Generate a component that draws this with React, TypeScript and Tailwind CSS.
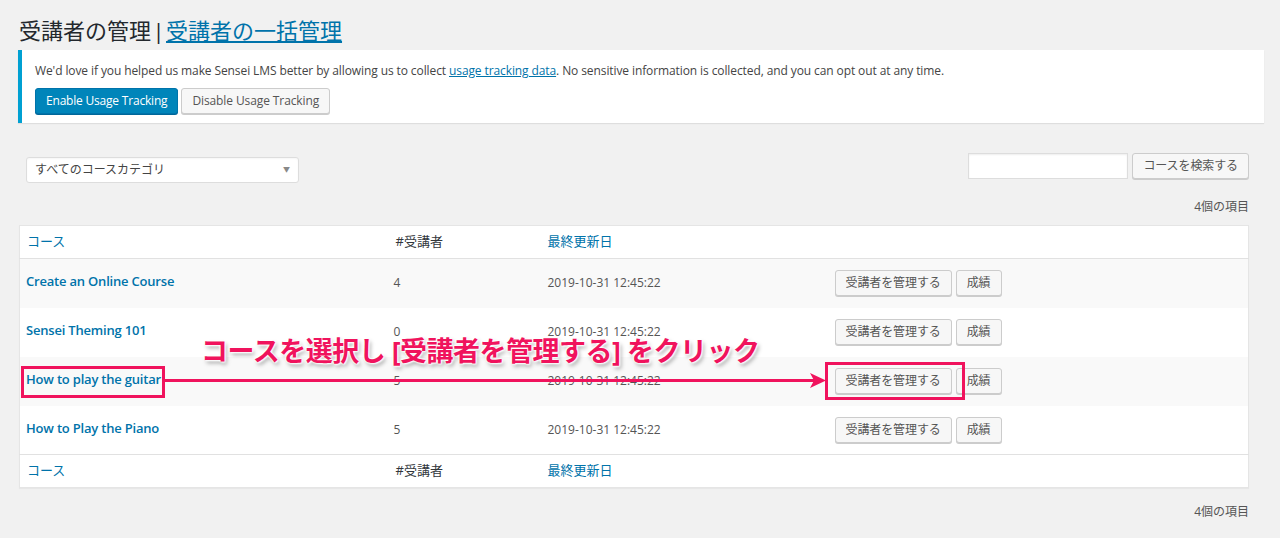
import React from 'react';

type Course = {
  title: string;
  students: number;
  updated: string;
};

const courses: Course[] = [
  { title: 'Create an Online Course', students: 4, updated: '2019-10-31 12:45:22' },
  { title: 'Sensei Theming 101', students: 0, updated: '2019-10-31 12:45:22' },
  { title: 'How to play the guitar', students: 5, updated: '2019-10-31 12:45:22' },
  { title: 'How to Play the Piano', students: 5, updated: '2019-10-31 12:45:22' },
];

const font = "font-['Open_Sans','Noto_Sans_CJK_JP',sans-serif]";

function GrayButton({ children }: { children: React.ReactNode }) {
  return (
    <button className="h-[26px] px-[10px] rounded-[3px] border border-[#cccccc] bg-[#f7f7f7] text-[12px] leading-[24px] tracking-[-0.1px] text-[#555555] shadow-[0_1px_0_#cccccc]">
      {children}
    </button>
  );
}

function HeaderRow() {
  return (
    <tr className="h-[33px]">
      <th className="pl-[7px] text-left font-normal text-[13px] text-[#0073aa]">コース</th>
      <th className="pl-[7px] text-left font-normal text-[13px] text-[#32373c]">#受講者</th>
      <th className="pl-[7px] text-left font-normal text-[13px] text-[#0073aa]">最終更新日</th>
      <th></th>
    </tr>
  );
}

export default function App() {
  return (
    <div className={`relative min-h-[538px] bg-[#f1f1f1] pl-[18px] pr-[16px] pt-[15px] ${font}`}>
      {/* page title */}
      <h1 className="pl-[1px] text-[22px] leading-[30px] font-normal text-[#23282d]">
        受講者の管理<span className="inline-block w-[15px] text-center">|</span>
        <a className="text-[#0073aa] underline underline-offset-[2px]">受講者の一括管理</a>
      </h1>

      {/* usage tracking notice */}
      <div className="mt-[5px] bg-white border-l-4 border-[#00a0d2] shadow-[0_1px_1px_rgba(0,0,0,0.08)] pl-[13px] pt-[11px] pb-[9px]">
        <p className="text-[12px] leading-[19px] tracking-[-0.1px] text-[#444444]">
          We'd love if you helped us make Sensei LMS better by allowing us to collect{' '}
          <a className="text-[#0073aa] underline">usage tracking data</a>. No sensitive information is
          collected, and you can opt out at any time.
        </p>
        <div className="mt-[8px] flex gap-[3px]">
          <button className="h-[26px] px-[10px] rounded-[3px] border border-[#0073aa] bg-[#0085ba] text-[12px] leading-[24px] tracking-[-0.2px] text-white shadow-[0_1px_0_#006799]">
            Enable Usage Tracking
          </button>
          <GrayButton>Disable Usage Tracking</GrayButton>
        </div>
      </div>

      <div className="pl-[1px] pr-[15px]">
        {/* filters */}
        <div className="mt-[30px] flex items-start justify-between">
          <div className="mt-[4px] ml-[7px] w-[273px] h-[26px] flex items-center justify-between rounded-[3px] border border-[#dddddd] bg-white px-[8px] shadow-[inset_0_1px_2px_rgba(0,0,0,0.04)]">
            <span className="text-[12px] text-[#444444]">すべてのコースカテゴリ</span>
            <span className="text-[7px] text-[#888888]">▼</span>
          </div>
          <div className="flex gap-[4px]">
            <div className="w-[160px] h-[26px] border border-[#dddddd] bg-white shadow-[inset_0_1px_2px_rgba(0,0,0,0.07)]"></div>
            <GrayButton>コースを検索する</GrayButton>
          </div>
        </div>

        <div className="mt-[15px] text-right text-[12px] leading-[18px] text-[#555555]">4個の項目</div>

        {/* courses table */}
        <table className="mt-[9px] w-full table-fixed border-collapse bg-white border border-[#e5e5e5] shadow-[0_1px_1px_rgba(0,0,0,0.04)]">
          <colgroup>
            <col className="w-[369px]" />
            <col className="w-[152px]" />
            <col className="w-[288px]" />
            <col />
          </colgroup>
          <thead className="border-b border-[#e1e1e1]">
            <HeaderRow />
          </thead>
          <tbody>
            {courses.map((c, i) => (
              <tr key={c.title} className={`h-[49px] ${i % 2 === 0 ? 'bg-[#f9f9f9]' : 'bg-white'}`}>
                <td className="pl-[6px] pb-[3px] text-[13px] font-semibold tracking-[-0.2px] text-[#0073aa]">{c.title}</td>
                <td className="pl-[5px] text-[12px] text-[#555555]">{c.students}</td>
                <td className="pl-[7px] text-[12px] text-[#555555]">{c.updated}</td>
                <td className="pl-[6px]">
                  <div className="flex gap-[4px]">
                    <GrayButton>受講者を管理する</GrayButton>
                    <GrayButton>成績</GrayButton>
                  </div>
                </td>
              </tr>
            ))}
          </tbody>
          <tfoot className="border-t border-[#e1e1e1]">
            <HeaderRow />
          </tfoot>
        </table>

        <div className="mt-[15px] text-right text-[12px] leading-[18px] text-[#555555]">4個の項目</div>
      </div>

      {/* annotation overlay */}
      <div className="pointer-events-none absolute left-[201px] top-[334px] whitespace-nowrap text-[27px] leading-[34px] font-bold tracking-[-0.5px] text-[#f0135d] [text-shadow:0_0_2px_#fff,0_0_2px_#fff,1px_1px_2px_#fff,-1px_-1px_2px_#fff,2px_3px_4px_rgba(0,0,0,0.35)]">
        コースを選択し [受講者を管理する] をクリック
      </div>
      <div className="pointer-events-none absolute left-[21px] top-[366px] w-[144px] h-[32px] border-[3px] border-[#f0135d]"></div>
      <div className="pointer-events-none absolute left-[165px] top-[379px] w-[650px] h-[3px] bg-[#f0135d]"></div>
      <svg className="pointer-events-none absolute left-[810px] top-[373px]" width="16" height="15" viewBox="0 0 16 15">
        <polygon points="0,0 16,7.5 0,15 4,7.5" fill="#f0135d" />
      </svg>
      <div className="pointer-events-none absolute left-[825px] top-[362px] w-[140px] h-[38px] border-[3px] border-[#f0135d]"></div>
    </div>
  );
}
